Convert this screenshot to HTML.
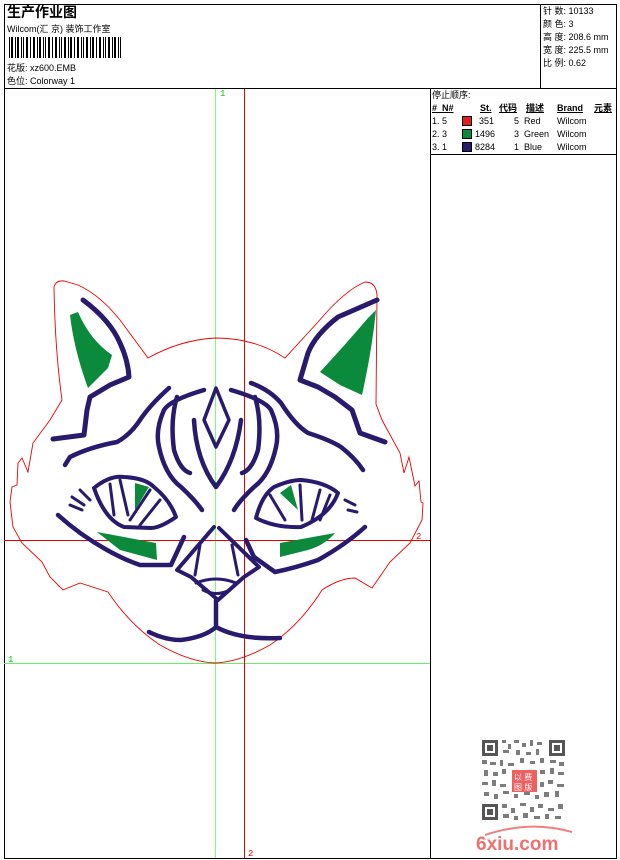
<!DOCTYPE html>
<html><head><meta charset="utf-8"><style>
body{margin:0;background:#fff;width:620px;height:860px;overflow:hidden;font-family:"Liberation Sans","Noto Sans CJK SC",sans-serif;}
.t{position:absolute;font-size:9px;color:#000;white-space:nowrap;line-height:10px}
</style></head><body>
<svg width="620" height="860" style="position:absolute;left:0;top:0">
<g fill="none" stroke="#000" stroke-width="1">
<rect x="4.5" y="4.5" width="612" height="854"/>
<line x1="4" y1="88.5" x2="616" y2="88.5"/>
<line x1="540.5" y1="4" x2="540.5" y2="88"/>
<line x1="430.5" y1="88" x2="430.5" y2="858"/>
<line x1="430" y1="154.5" x2="616" y2="154.5"/>
</g>
<g fill="#000">
<rect x="9" y="37" width="1" height="21"/><rect x="11" y="37" width="2" height="21"/><rect x="15" y="37" width="1" height="21"/><rect x="17" y="37" width="2" height="21"/><rect x="21" y="37" width="1" height="21"/><rect x="23" y="37" width="1" height="21"/><rect x="26" y="37" width="2" height="21"/><rect x="30" y="37" width="1" height="21"/><rect x="33" y="37" width="2" height="21"/><rect x="37" y="37" width="1" height="21"/><rect x="39" y="37" width="2" height="21"/><rect x="43" y="37" width="1" height="21"/><rect x="45" y="37" width="1" height="21"/><rect x="48" y="37" width="2" height="21"/><rect x="52" y="37" width="1" height="21"/><rect x="55" y="37" width="2" height="21"/><rect x="59" y="37" width="1" height="21"/><rect x="61" y="37" width="1" height="21"/><rect x="64" y="37" width="2" height="21"/><rect x="68" y="37" width="1" height="21"/><rect x="70" y="37" width="2" height="21"/><rect x="74" y="37" width="1" height="21"/><rect x="77" y="37" width="2" height="21"/><rect x="81" y="37" width="1" height="21"/><rect x="83" y="37" width="1" height="21"/><rect x="86" y="37" width="2" height="21"/><rect x="90" y="37" width="1" height="21"/><rect x="92" y="37" width="2" height="21"/><rect x="96" y="37" width="1" height="21"/><rect x="99" y="37" width="2" height="21"/><rect x="103" y="37" width="1" height="21"/><rect x="105" y="37" width="1" height="21"/><rect x="108" y="37" width="2" height="21"/><rect x="112" y="37" width="1" height="21"/><rect x="114" y="37" width="2" height="21"/><rect x="118" y="37" width="1" height="21"/><rect x="120" y="37" width="1" height="21"/>
</g>
<line x1="215.5" y1="89" x2="215.5" y2="858" stroke="#7f7" stroke-width="1"/>
<line x1="4" y1="663.5" x2="430" y2="663.5" stroke="#6e6" stroke-width="1"/>
<line x1="244.5" y1="89" x2="244.5" y2="858" stroke="#e00" stroke-width="1"/>
<line x1="4" y1="540.5" x2="430" y2="540.5" stroke="#e00" stroke-width="1"/>
<text x="220" y="96" font-size="9" fill="#0c0" font-family="Liberation Mono">1</text>
<text x="8" y="662" font-size="9" fill="#0c0" font-family="Liberation Mono">1</text>
<text x="248" y="856" font-size="9" fill="#e00" font-family="Liberation Mono">2</text>
<text x="416" y="539" font-size="9" fill="#e00" font-family="Liberation Mono">2</text>
<path fill="none" stroke="#e00" stroke-width="0.9" d="M54,287 Q56,280 64,281 L78,285 Q100,295 120,320 L148,358 Q180,340 215,338 Q255,338 285,358 L318,322 Q345,290 365,282 Q376,282 377,295 L376,404 L382,420 L400,453 L404,473 L409,457 L415,486 L419,481 L421,502 L423,503 L422,520 L410,543 L390,562 L372,588 L355,578 Q340,578 322,590 Q300,625 270,645 Q240,662 215,663 Q190,662 160,645 Q130,625 108,592 L80,583 L63,590 L50,577 L42,562 L22,543 L13,527 L10,502 L12,487 L17,485 L18,463 L22,458 L28,472 L33,443 L50,420 L62,400 Q55,350 54,287Z"/>
<g fill="#0a8a3a">
<path d="M70,315 L78,312 Q90,340 112,355 L108,368 L88,388 Q74,350 70,315Z"/>
<path d="M376,310 L368,318 Q345,345 320,372 L340,385 L362,395 Q372,350 376,310Z"/>
<path d="M135,483 L149,487 L135,510Z"/>
<path d="M280,493 L291,485 L298,510Z"/>
<path d="M97,532 L156,543 L157,560 L120,550Z"/>
<path d="M280,543 L335,533 Q325,545 308,550 L280,557Z"/>
</g>
<g fill="none" stroke="#2a1a6e" stroke-width="4.5" stroke-linecap="round" stroke-linejoin="round">
<path d="M83,300 Q110,320 120,343 Q128,360 129,377 L110,385 L90,397 L87,410 L84,435 L53,439" stroke-width="5"/>
<path d="M377,300 L338,317 Q315,335 308,353 L300,380 L318,387 L335,397 L352,410 L360,433 L385,442" stroke-width="5"/>
<path d="M169,388 Q150,405 140,420 Q130,435 117,442 Q90,447 70,457 L65,465"/>
<path d="M251,383 Q270,390 281,403 Q295,425 308,433 Q330,440 341,447 Q355,458 363,470"/>
<path d="M216,388 L204,420 L216,447 L229,420Z" stroke-width="3.5"/>
<path d="M204,390 Q170,400 164,410 Q155,430 159,447 Q165,475 181,487 Q195,500 202,510"/>
<path d="M231,390 Q265,400 271,410 Q280,430 276,447 Q270,475 254,487 Q240,500 234,510"/>
<path d="M177,397 Q170,420 174,450 Q180,470 190,473"/>
<path d="M255,397 Q262,420 258,450 Q252,470 242,473"/>
<path d="M194,420 Q196,460 216,487 Q236,460 241,420"/>
<path d="M94,488 Q110,475 124,477 Q145,478 154,487 Q170,500 176,517 Q160,528 151,528 L124,527 Q105,520 94,488Z" stroke-width="4"/>
<path d="M110,484 L114,515 M120,480 L128,515 M150,490 L130,520 M160,500 L140,525" stroke-width="3"/>
<path d="M256,518 Q262,495 274,487 Q290,480 301,480 Q325,482 338,493 Q330,515 301,527 Q275,528 256,518Z" stroke-width="4"/>
<path d="M270,495 L285,520 M300,485 L302,520 M320,490 L312,520 M330,495 L320,520" stroke-width="3"/>
<path d="M58,515 Q80,535 107,550 Q125,560 140,565 L171,565 L184,537"/>
<path d="M70,505 L82,510 M72,497 L84,505 M80,490 L90,500" stroke-width="3"/>
<path d="M365,527 Q345,545 318,560 Q295,568 275,572 L254,557 L246,540"/>
<path d="M345,500 L355,505 M348,510 L357,512" stroke-width="3"/>
<path d="M214,527 L177,570 L191,577 L218,600 L244,577 L259,567 L219,528" stroke-width="4"/>
<path d="M200,545 L195,575 M232,545 L238,575 M196,583 Q216,575 236,583 M203,590 Q216,597 230,590" stroke-width="3"/>
<path d="M216,600 L216,627 M149,632 Q165,640 181,640 Q205,637 216,627 Q240,640 280,638"/>
</g>
<g fill="#555">
<rect x="482" y="740" width="16" height="16"/><rect x="549" y="740" width="16" height="16"/><rect x="482" y="804" width="16" height="16"/>
</g>
<g fill="#fff"><rect x="485" y="743" width="10" height="10"/><rect x="552" y="743" width="10" height="10"/><rect x="485" y="807" width="10" height="10"/></g>
<g fill="#555"><rect x="487" y="745" width="6" height="6"/><rect x="554" y="745" width="6" height="6"/><rect x="487" y="809" width="6" height="6"/></g>
<g fill="#666" opacity="0.85">
<rect x="502" y="740" width="4" height="3"/><rect x="508" y="744" width="3" height="5"/><rect x="514" y="740" width="5" height="3"/><rect x="522" y="743" width="4" height="4"/><rect x="530" y="740" width="3" height="6"/><rect x="537" y="742" width="5" height="3"/><rect x="503" y="750" width="6" height="3"/><rect x="516" y="750" width="4" height="5"/><rect x="526" y="752" width="5" height="3"/><rect x="536" y="749" width="3" height="6"/>
<rect x="482" y="760" width="5" height="4"/><rect x="490" y="762" width="6" height="3"/><rect x="500" y="760" width="3" height="6"/><rect x="508" y="763" width="6" height="3"/><rect x="520" y="758" width="4" height="5"/><rect x="530" y="761" width="5" height="3"/><rect x="540" y="758" width="4" height="5"/><rect x="550" y="760" width="6" height="3"/><rect x="559" y="762" width="5" height="4"/>
<rect x="484" y="770" width="4" height="6"/><rect x="493" y="772" width="5" height="4"/><rect x="502" y="769" width="4" height="5"/><rect x="540" y="770" width="5" height="4"/><rect x="550" y="768" width="4" height="6"/><rect x="558" y="772" width="6" height="3"/>
<rect x="482" y="782" width="6" height="3"/><rect x="492" y="780" width="4" height="6"/><rect x="500" y="784" width="6" height="3"/><rect x="540" y="782" width="4" height="5"/><rect x="548" y="780" width="5" height="4"/><rect x="557" y="784" width="7" height="3"/>
<rect x="484" y="792" width="5" height="4"/><rect x="494" y="794" width="4" height="5"/><rect x="503" y="791" width="6" height="3"/><rect x="514" y="794" width="4" height="4"/><rect x="524" y="792" width="6" height="3"/><rect x="535" y="795" width="4" height="4"/><rect x="544" y="792" width="5" height="5"/><rect x="555" y="791" width="4" height="6"/>
<rect x="502" y="804" width="5" height="4"/><rect x="511" y="808" width="4" height="5"/><rect x="520" y="803" width="6" height="3"/><rect x="530" y="807" width="4" height="5"/><rect x="538" y="804" width="5" height="4"/><rect x="548" y="808" width="6" height="3"/><rect x="558" y="804" width="5" height="5"/>
<rect x="503" y="814" width="6" height="4"/><rect x="514" y="816" width="4" height="4"/><rect x="523" y="813" width="5" height="5"/><rect x="534" y="816" width="6" height="3"/><rect x="545" y="814" width="4" height="5"/><rect x="555" y="816" width="6" height="3"/>
</g>
<rect x="512" y="770" width="25" height="22" fill="#f06060"/>
<text x="514" y="780" font-size="8" fill="#fff">以 费</text>
<text x="514" y="790" font-size="8" fill="#fff">图 版</text>
<path d="M485,835 Q530,820 572,832" stroke="#f08080" stroke-width="2" fill="none"/>
<text x="476" y="850" font-size="19" font-weight="bold" fill="#f07070" font-family="Liberation Sans">6xiu.com</text>
</svg>
<div class="t" style="left:7px;top:4px;font-size:14px;line-height:16px;font-weight:bold">生产作业图</div>
<div class="t" style="left:7px;top:24px">Wilcom(汇 京) 装饰工作室</div>
<div class="t" style="left:7px;top:63px">花版:  xz600.EMB</div>
<div class="t" style="left:7px;top:76px">色位:  Colorway 1</div>
<div class="t" style="left:543px;top:6px">针 数:  10133</div>
<div class="t" style="left:543px;top:19px">颜 色:  3</div>
<div class="t" style="left:543px;top:32px">高 度:  208.6 mm</div>
<div class="t" style="left:543px;top:45px">宽 度:  225.5 mm</div>
<div class="t" style="left:543px;top:58px">比 例:  0.62</div>
<div class="t" style="left:432px;top:90px">停止顺序:</div>
<div class="t" style="left:432px;top:103px;font-weight:bold;text-decoration:underline">#&nbsp;&nbsp;N#</div>
<div class="t" style="left:480px;top:103px;font-weight:bold;text-decoration:underline">St.</div>
<div class="t" style="left:499px;top:103px;font-weight:bold;text-decoration:underline">代码</div>
<div class="t" style="left:526px;top:103px;font-weight:bold;text-decoration:underline">描述</div>
<div class="t" style="left:557px;top:103px;font-weight:bold;text-decoration:underline">Brand</div>
<div class="t" style="left:594px;top:103px;font-weight:bold;text-decoration:underline">元素</div>
<div class="t" style="left:432px;top:116px">1. 5</div><div style="position:absolute;left:462px;top:116px;width:8px;height:8px;background:#e02020;border:1px solid #000"></div><div class="t" style="left:479px;top:116px">351</div><div class="t" style="left:514px;top:116px">5&nbsp; Red</div><div class="t" style="left:557px;top:116px">Wilcom</div>
<div class="t" style="left:432px;top:129px">2. 3</div><div style="position:absolute;left:462px;top:129px;width:8px;height:8px;background:#0a8a3a;border:1px solid #000"></div><div class="t" style="left:475px;top:129px">1496</div><div class="t" style="left:514px;top:129px">3&nbsp; Green</div><div class="t" style="left:557px;top:129px">Wilcom</div>
<div class="t" style="left:432px;top:142px">3. 1</div><div style="position:absolute;left:462px;top:142px;width:8px;height:8px;background:#2a1a6e;border:1px solid #000"></div><div class="t" style="left:475px;top:142px">8284</div><div class="t" style="left:514px;top:142px">1&nbsp; Blue</div><div class="t" style="left:557px;top:142px">Wilcom</div>
</body></html>
